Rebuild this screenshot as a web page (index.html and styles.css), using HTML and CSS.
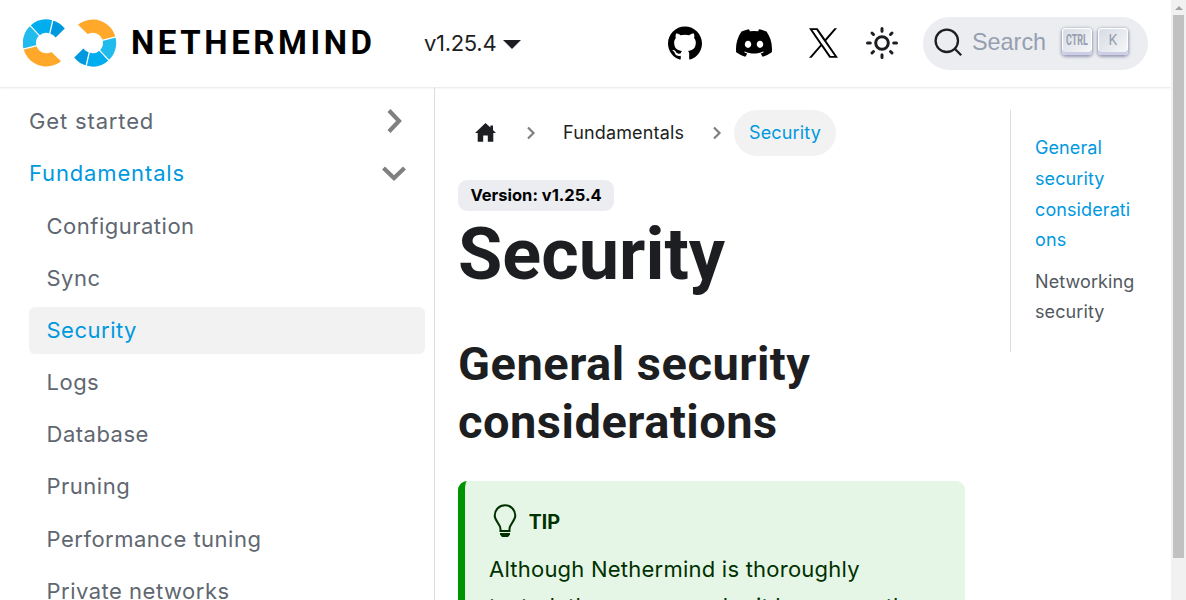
FILE: index.html
```
<!DOCTYPE html>
<html lang="en">
<head>
<meta charset="utf-8">
<title>Security | Nethermind documentation</title>
<link rel="stylesheet" href="styles.css">
</head>
<body>
<div class="window">
<div class="page">
  <header class="navbar">
    <a class="brand">
      <svg class="brand-mark" viewBox="0 0 94 48">
        <defs>
          <g id="ring">
            <path d="M-22.700 6.100A23.500 23.500 0 0 0 14.700 18.300L5 8.900A10.200 10.200 0 0 1-9.900 2.700z" fill="#ffa829"/>
            <path d="M-22.700 6.100A23.500 23.500 0 0 1-16-17.200L-7-7.500A10.200 10.200 0 0 0-9.900 2.700z" fill="#22bbed"/>
            <path d="M-16-17.200A23.500 23.500 0 0 1 6.500-22.600L3.500-9.600A10.200 10.200 0 0 0-7-7.500z" fill="#00adef"/>
            <path d="M6.500-22.600A23.500 23.500 0 0 1 18.500-14.500L9.300-5.500A10.200 10.200 0 0 0 3.500-9.600z" fill="#0099df"/>
            <path d="M-23.200 6.200L-9.400 2.600M-16.400-17.600L-6.600-7.100M6.600-23.200L3.400-9.100" stroke="#fff" stroke-width="1.300"/>
          </g>
        </defs>
        <use href="#ring" transform="translate(23.300 24)"/>
        <use href="#ring" transform="translate(69.700 24) rotate(180)"/>
      </svg>
      <svg class="wordmark" viewBox="0 0 244 34"><text x="-1" y="28" textLength="241" lengthAdjust="spacing">NETHERMIND</text></svg>
    </a>
    <a class="version">v1.25.4<span class="caret"></span></a>
    <nav class="nav-icons">
      <svg width="34" height="34" viewBox="0 0 24 24"><path d="M12 .297c-6.630 0-12 5.373-12 12 0 5.303 3.438 9.800 8.205 11.385.6.113.82-.258.82-.577 0-.285-.01-1.040-.015-2.040-3.338.724-4.042-1.610-4.042-1.610C4.422 18.070 3.633 17.700 3.633 17.700c-1.087-.744.084-.729.084-.729 1.205.084 1.838 1.236 1.838 1.236 1.070 1.835 2.809 1.305 3.495.998.108-.776.417-1.305.76-1.605-2.665-.3-5.466-1.332-5.466-5.930 0-1.310.465-2.380 1.235-3.220-.135-.303-.54-1.523.105-3.176 0 0 1.005-.322 3.300 1.230.96-.267 1.980-.399 3-.405 1.020.006 2.040.138 3 .405 2.280-1.552 3.285-1.230 3.285-1.230.645 1.653.24 2.873.12 3.176.765.84 1.230 1.910 1.230 3.220 0 4.610-2.805 5.625-5.475 5.920.42.36.81 1.096.81 2.220 0 1.606-.015 2.896-.015 3.286 0 .315.21.69.825.57C20.565 22.092 24 17.592 24 12.297c0-6.627-5.373-12-12-12"/></svg>
      <svg width="36" height="36" viewBox="0 0 24 24"><path d="M20.317 4.370a19.800 19.800 0 0 0-4.885-1.515.074.074 0 0 0-.079.037c-.21.375-.444.864-.608 1.250a18.300 18.300 0 0 0-5.487 0 12.600 12.600 0 0 0-.617-1.250.077.077 0 0 0-.079-.037A19.700 19.700 0 0 0 3.677 4.370a.07.07 0 0 0-.032.027C.533 9.046-.32 13.580.099 18.058a.08.08 0 0 0 .031.057 19.900 19.900 0 0 0 5.993 3.030.078.078 0 0 0 .084-.028c.462-.63.874-1.295 1.226-1.994a.076.076 0 0 0-.041-.106 13.100 13.100 0 0 1-1.872-.892.077.077 0 0 1-.008-.128c.126-.094.252-.192.372-.292a.074.074 0 0 1 .077-.01c3.928 1.793 8.180 1.793 12.062 0a.074.074 0 0 1 .078.01c.12.098.246.198.373.292a.077.077 0 0 1-.006.127 12.300 12.300 0 0 1-1.873.892.077.077 0 0 0-.041.107c.36.698.772 1.362 1.225 1.993a.076.076 0 0 0 .084.028 19.800 19.800 0 0 0 6.002-3.030.077.077 0 0 0 .032-.054c.5-5.177-.838-9.674-3.549-13.660a.06.06 0 0 0-.031-.03zM8.020 15.330c-1.183 0-2.157-1.085-2.157-2.419s.956-2.419 2.157-2.419c1.210 0 2.176 1.096 2.157 2.420 0 1.333-.956 2.418-2.157 2.418zm7.975 0c-1.183 0-2.157-1.085-2.157-2.419s.955-2.419 2.157-2.419c1.210 0 2.176 1.096 2.157 2.420 0 1.333-.946 2.418-2.157 2.418z"/></svg>
      <svg width="29" height="30" viewBox="0 0 1200 1227"><path d="M714.163 519.284L1160.890 0H1055.030L667.137 450.887L357.328 0H0L468.492 681.821L0 1226.370H105.866L515.491 750.218L842.672 1226.370H1200L714.137 519.284H714.163ZM569.165 687.828L521.697 619.934L144.011 79.694H306.615L611.412 515.685L658.880 583.579L1055.080 1150.300H892.476L569.165 687.854V687.828Z"/></svg>
      <svg class="sun" width="32" height="32" viewBox="0 0 32 32"><circle cx="16" cy="16" r="6.300"/><path d="M16 1.500v2.800M16 27.700v2.800M1.500 16h2.800M27.700 16h2.800M6 6l1.500 1.500M24.500 24.500L26 26M6 26l1.500-1.500M24.500 7.500L26 6"/></svg>
    </nav>
    <div class="search">
      <svg class="glass" width="29" height="29" viewBox="0 0 29 29"><circle cx="12.800" cy="12.800" r="11.200"/><path d="M20.800 20.800l6.400 6.400"/></svg>
      <span class="search-label">Search</span>
      <kbd class="key"><svg width="24" height="18" viewBox="0 0 24 18"><text x="1" y="14" textLength="22" lengthAdjust="spacingAndGlyphs">CTRL</text></svg></kbd>
      <kbd class="key key-k">K</kbd>
    </div>
  </header>
  <div class="layout">
    <aside class="sidebar">
      <a class="item top">Get started<svg width="24" height="24" viewBox="0 0 24 24"><path d="M7 1.500L17 12 7 22.500"/></svg></a>
      <a class="item top current">Fundamentals<svg width="24" height="24" viewBox="0 0 24 24"><path d="M1.500 7L12 17 22.500 7"/></svg></a>
      <a class="item sub">Configuration</a>
      <a class="item sub">Sync</a>
      <a class="item sub current selected">Security</a>
      <a class="item sub">Logs</a>
      <a class="item sub">Database</a>
      <a class="item sub">Pruning</a>
      <a class="item sub">Performance tuning</a>
      <a class="item sub">Private networks</a>
    </aside>
    <main class="doc">
      <article class="article">
        <nav class="crumbs">
          <svg class="home" width="21" height="20" viewBox="0 0 21 20"><path d="M10.500 0L0 10h2.700v8.800h5.500v-6.200h4.600v6.200h5.500V10H21l-3-2.900V2.500h-2.600v2.100z"/></svg>
          <svg class="sep" width="10" height="14" viewBox="0 0 10 14"><path d="M2 1.500L7.500 7 2 12.500"/></svg>
          <a class="crumb">Fundamentals</a>
          <svg class="sep" width="10" height="14" viewBox="0 0 10 14"><path d="M2 1.500L7.500 7 2 12.500"/></svg>
          <a class="crumb active">Security</a>
        </nav>
        <span class="badge">Version: v1.25.4</span>
        <h1>Security</h1>
        <h2>General security considerations</h2>
        <section class="tip">
          <h5><svg width="24" height="34" viewBox="0 0 24 34"><path class="bulb" d="M7.500 27v-2C7.500 20 1.700 17 1.700 11.500a10.300 10.300 0 0 1 20.600 0C22.300 17 16.500 20 16.500 25v2z"/><path class="bulb-base" d="M7 29h10v1.500L15 33H9l-2-2.500z"/></svg><span>TIP</span></h5>
          <p>Although Nethermind is thoroughly<br>tested, the more popular it becomes, the<br>more likely it will be the target of<br>potential attacks.</p>
        </section>
      </article>
      <aside class="toc">
        <a class="active">General security considerations</a>
        <a>Networking security</a>
      </aside>
    </main>
  </div>
</div>
<div class="scrollbar"><span class="arrow"></span><span class="thumb"></span></div>
</div>
</body>
</html>
```
FILE: styles.css
```
* { box-sizing: border-box; }
body { margin: 0; font-family: Inter, "Open Sans", sans-serif; color: #1c1e21; background: #fff; overflow: hidden; }
.window { display: flex; height: 600px; overflow: hidden; }
.page { flex: 1; min-width: 0; display: flex; flex-direction: column; }
.scrollbar { width: 15px; background: #f1f1f1; display: flex; flex-direction: column; align-items: center; padding-top: 6px; }
.arrow { border: 4px solid transparent; border-top: 0; border-bottom: 4px solid #a3a3a3; }
.thumb { width: 11px; height: 543px; margin-top: 5px; background: #c1c1c1; }

.navbar { flex: none; height: 87px; display: flex; align-items: center; padding: 0 23px 1px; box-shadow: 0 1px 2px rgba(0, 0, 0, .1); }
.brand { display: flex; align-items: center; width: 401px; }
.brand-mark { width: 94px; height: 48px; margin-right: 15px; }
.wordmark { width: 244px; height: 34px; overflow: visible; }
.wordmark text { font: bold 33px Roboto, sans-serif; fill: #000; }
.version { display: flex; align-items: center; font-size: 22px; letter-spacing: -.3px; width: 244px; padding-bottom: 1px; }
.caret { margin-left: 7px; margin-top: 3px; border: 9px solid transparent; border-top-color: #1c1e21; border-bottom: 0; }
.nav-icons { display: flex; align-items: center; width: 255px; }
.nav-icons svg:nth-child(2) { margin-left: 34px; }
.nav-icons svg:nth-child(3) { margin-left: 37px; }
.nav-icons .sun { margin-left: 28px; }
.sun circle, .sun path { fill: none; stroke: #1c1e21; stroke-width: 3; stroke-linecap: round; }
.search { display: flex; align-items: center; width: 225px; height: 53px; border-radius: 27px; background: #ebedf0; padding: 0 0 1px 11px; }
.glass circle, .glass path { fill: none; stroke: #1c1e21; stroke-width: 2.300; }
.search-label { font: 23.400px "Liberation Sans", sans-serif; color: #969faf; margin: 0 16px 0 9px; width: 74px; }
.key { display: flex; align-items: center; justify-content: center; flex: none; width: 30px; height: 27px; margin: 0 6px 2px 0; border-radius: 4px; background: linear-gradient(-225deg, #d5dbe4, #f8f8f8); color: #969faf; box-shadow: inset 0 -3px 0 #cdcde6, inset 0 0 1px 1px #fff, 0 1px 3px 1px rgba(30, 35, 90, .4); padding-bottom: 3px; }
.key svg { flex: none; overflow: visible; }
.key text { font: bold 14px Roboto, sans-serif; fill: #969faf; }
.key-k { font: 14px Roboto, sans-serif; }

.layout { flex: 1; display: flex; min-height: 0; overflow: hidden; }
.sidebar { flex: none; width: 435px; padding: 11px 9px 0 29px; border-right: 1px solid #dadde1; }
.item { display: flex; align-items: center; justify-content: space-between; height: 47px; margin-bottom: 5.150px; padding-right: 19px; border-radius: 6px; font-size: 22px; letter-spacing: .5px; color: #606770; }
.item svg path { fill: none; stroke: #808080; stroke-width: 4.200; }
.top { letter-spacing: .85px; padding-bottom: 1px; }
.sub { padding-left: 17.500px; }
.current { color: #0099df; }
.selected { background: #f2f2f2; }

.doc { flex: 1; display: flex; padding: 23px 23px 0; min-width: 0; }
.article { width: 507px; }
.crumbs { display: flex; align-items: center; height: 46px; font-size: 18px; letter-spacing: .15px; padding-left: 17px; }
.home { fill: #1c1e21; margin-right: 30px; }
.sep { flex: none; }
.sep path { fill: none; stroke: #808080; stroke-width: 2.200; }
.crumb { flex: none; height: 46px; line-height: 46px; margin: 0 12px; padding: 0 15px; border-radius: 23px; width: 152px; white-space: nowrap; }
.crumb.active { color: #0099df; background: #f2f2f2; width: 102px; }
.badge { display: block; width: 156px; height: 31px; line-height: 31px; margin-top: 24px; text-align: center; background: #ebedf0; border-radius: 9px; font-size: 16.500px; font-weight: 700; color: #000; white-space: nowrap; }
h1, h2, h5 { font-family: Roboto, sans-serif; font-weight: 700; margin: 0; }
h1 { font-size: 72px; line-height: 88px; }
h2 { font-size: 47px; line-height: 58px; letter-spacing: .5px; margin-top: 36px; }
.tip { margin-top: 30px; height: 400px; border-left: 7px solid #009400; border-radius: 9px; background: #e6f6e6; color: #003100; padding: 22px 24px; }
h5 { display: flex; align-items: center; height: 36px; font-size: 20px; padding-left: 4px; }
h5 span { margin: 2px 0 0 12px; }
.bulb { fill: none; stroke: #003100; stroke-width: 2; }
.bulb-base { fill: #003100; }
.tip p { margin: 12px 0 0; font-size: 22px; line-height: 37px; letter-spacing: .23px; white-space: nowrap; }
.toc { width: 138px; height: 242px; margin-left: 45px; border-left: 1px solid #dadde1; padding: 23px 10px 0 24px; font-size: 18px; letter-spacing: .1px; line-height: 30.800px; color: #525860; }
.toc a { display: block; margin-bottom: 10.500px; overflow-wrap: anywhere; }
.toc .active { color: #0099df; padding-right: 5px; }
```
